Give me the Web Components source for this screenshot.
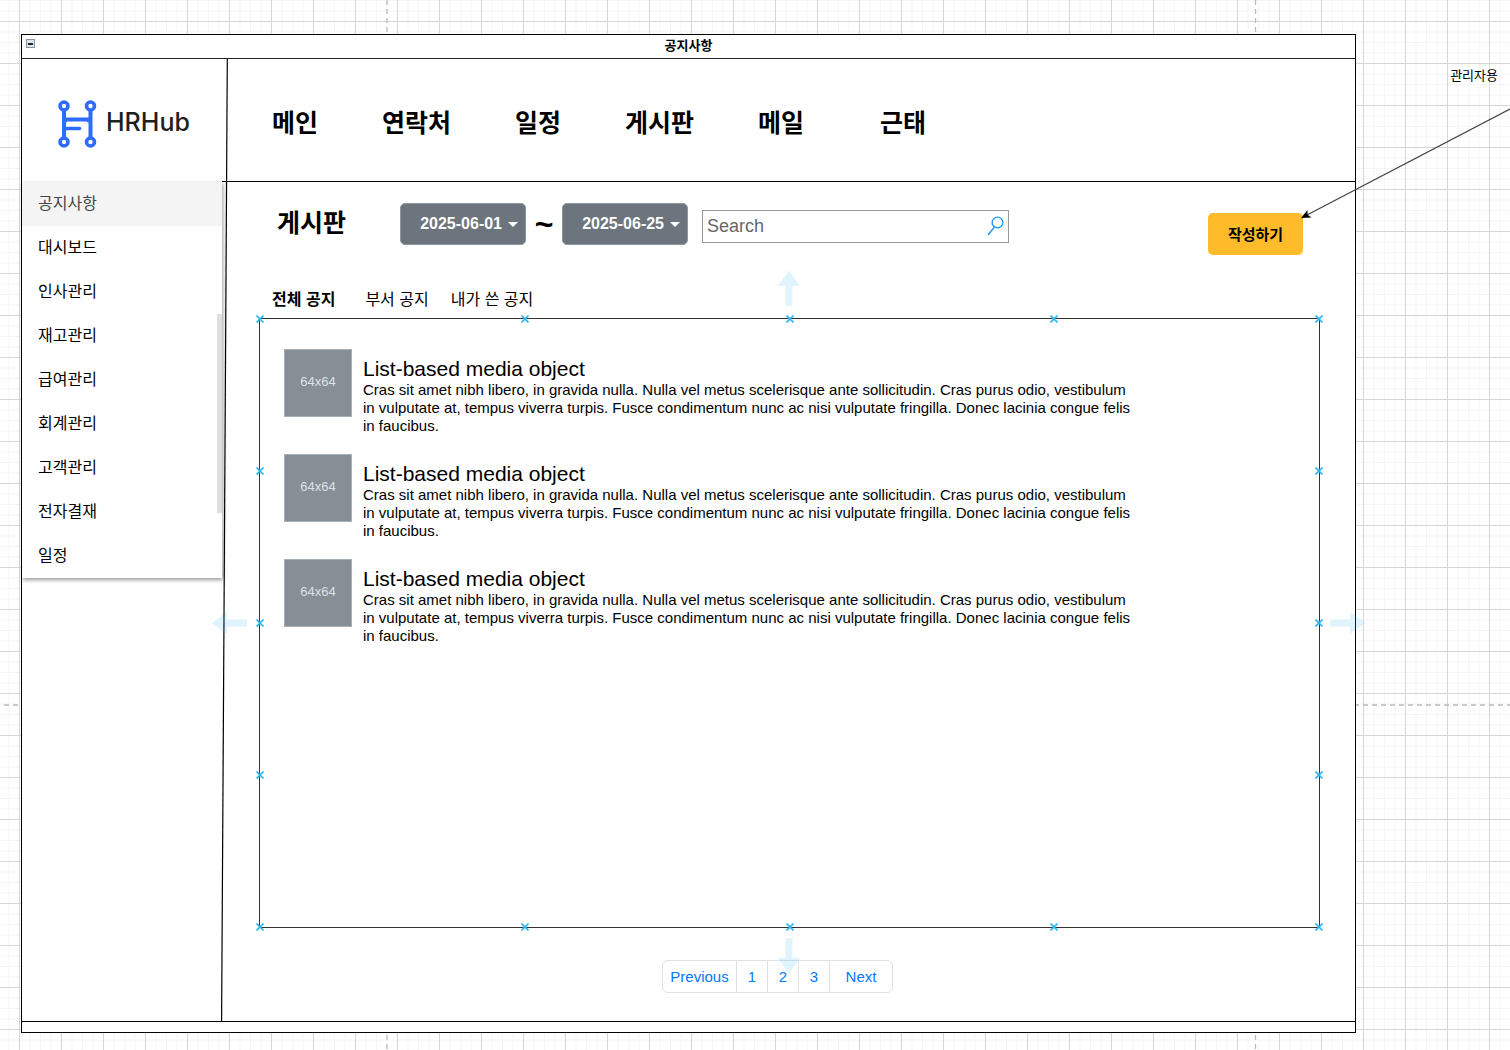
<!DOCTYPE html>
<html lang="ko">
<head>
<meta charset="utf-8">
<title>공지사항</title>
<style>
body{margin:0;font-family:"Liberation Sans","Noto Sans CJK KR",sans-serif;color:#000}
</style>
</head>
<body>
<hr-canvas></hr-canvas>
<script>
const define = (name, html, setup) => {
  const tpl = document.createElement('template');
  tpl.innerHTML = html;
  customElements.define(name, class extends HTMLElement {
    constructor() {
      super();
      this.attachShadow({ mode: 'open' }).append(tpl.content.cloneNode(true));
    }
    connectedCallback() { if (setup) setup(this, this.shadowRoot); }
  });
};

define('hr-logo', `
<style>
:host{display:flex;align-items:center;gap:9px}
svg{display:block;flex:none}
span{padding-bottom:4px;font:500 25px/34px Inter,sans-serif;color:#1f1f1f}
</style>
<svg width="40" height="50" viewBox="0 0 40 50" fill="none" stroke="#2f6bff" aria-hidden="true">
  <g stroke-width="3.6"><circle cx="7" cy="7" r="4"/><circle cx="33.500" cy="7" r="4"/><circle cx="7" cy="43" r="4"/><circle cx="33.500" cy="43" r="4"/></g>
  <path stroke-width="4" d="M7 11V39M33.500 11V39M7 20.500H33"/>
  <path stroke-width="3.600" stroke-linecap="round" d="M8 29.500H22.500"/>
  <path fill="#2f6bff" stroke="none" d="M8 21h4q-3 1-3 4zM32 21h-4q3 1 3 4zM8 33v-4h4q-3 1-3 4z"/>
</svg>
<span>HRHub</span>`);

define('hr-nav', `
<style>
:host{display:block}
nav{display:flex;gap:64px}
a{color:#000;text-decoration:none;font:700 25px/36px "Noto Sans CJK KR",sans-serif;white-space:nowrap}
a:nth-child(6){margin-left:12px}
</style>
<nav><a href="#main">메인</a><a href="#contacts">연락처</a><a href="#schedule">일정</a><a href="#board">게시판</a><a href="#mail">메일</a><a href="#attendance">근태</a></nav>`);

define('hr-side-menu', `
<style>
:host{display:block;position:relative;background:#fff;box-shadow:1px 2px 4px rgba(0,0,0,.4)}
a{display:block;box-sizing:border-box;height:44px;padding:0 16px;color:#000;text-decoration:none;font:16px/40px "Noto Sans CJK KR",sans-serif}
a[aria-current]{background:#f4f4f4;color:#444}
i{position:absolute;right:0;top:132px;width:5px;height:199px;background:#dedede}
</style>
<nav><a href="#notice" aria-current="page">공지사항</a><a href="#dashboard">대시보드</a><a href="#people">인사관리</a><a href="#stock">재고관리</a><a href="#payroll">급여관리</a><a href="#accounts">회계관리</a><a href="#clients">고객관리</a><a href="#approval">전자결재</a><a href="#calendar">일정</a></nav><i></i>`);

define('hr-date-button', `
<style>
:host{display:block}
button{display:flex;align-items:center;justify-content:flex-end;gap:6px;box-sizing:border-box;width:126px;height:42px;padding:0 7px 0 0;border:1px solid #8d969c;border-radius:5px;background:#6c757d;color:#fff;font:700 16px/20px "Liberation Sans",sans-serif}
svg{display:block}
</style>
<button type="button"><slot></slot><svg width="10" height="5" viewBox="0 0 10 5" aria-hidden="true"><path fill="#fff" d="M0 0H10L5 5z"/></svg></button>`);

define('hr-search', `
<style>
:host{display:block}
form{display:flex;align-items:center;box-sizing:border-box;width:307px;height:33px;padding:0 4px;border:1px solid #999;background:#fff}
input{flex:1;min-width:0;border:0;padding:0;outline:0;background:none;font:18px/24px "Liberation Sans",sans-serif;color:#666}
input::placeholder{color:#666;opacity:1}
button{border:0;padding:0;background:none}
svg{display:block}
</style>
<form><input type="search" aria-label="Search" placeholder="Search"><button type="button" aria-label="Search"><svg width="17" height="20" viewBox="0 0 17 20" fill="none" stroke="#2196f3" stroke-width="1.300"><circle cx="10.500" cy="6.500" r="5.400"/><path d="M7.500 11L1 19"/></svg></button></form>`);

define('hr-toolbar', `
<style>
:host{display:flex;align-items:flex-start;justify-content:space-between;padding:0 52px 0 49px}
div{display:flex;align-items:center}
h1{margin:0 54px 0 0;padding-bottom:6px;font:700 25px/36px "Noto Sans CJK KR",sans-serif}
b{width:36px;text-align:center;font:700 32px/40px "Liberation Sans",sans-serif}
hr-search{margin:4px 0 0 14px}
.write{margin-top:10px;width:95px;height:42px;padding:0;border:0;border-radius:5px;background:#ffbb29;color:#000;font:700 15px/24px "Noto Sans CJK KR",sans-serif}
</style>
<div><h1>게시판</h1><hr-date-button>2025-06-01</hr-date-button><b>~</b><hr-date-button>2025-06-25</hr-date-button><hr-search></hr-search></div>
<button class="write" type="button">작성하기</button>`);

define('hr-tabs', `
<style>
:host{display:flex;gap:22px;padding-left:44px}
button{border:0;padding:0;background:none;color:#000;font:16px/24px "Noto Sans CJK KR",sans-serif}
.on{font-weight:700;margin-right:8px}
</style>
<button type="button" class="on">전체 공지</button><button type="button">부서 공지</button><button type="button">내가 쓴 공지</button>`);

define('hr-media', `
<style>
:host{display:flex;gap:11px;height:105px}
.thumb{flex:none;box-sizing:border-box;width:68px;height:68px;border:1px solid #a9b0b5;background:#868e96;color:#dee2e6;font:13px/64px "Liberation Sans",sans-serif;text-align:center}
h2{margin:8px 0 0;font:400 21px/24px "Liberation Sans",sans-serif}
p{margin:0;max-width:770px;font:15px/18px "Liberation Sans",sans-serif}
</style>
<div class="thumb">64x64</div>
<div><h2><slot name="title"></slot></h2><p><slot></slot></p></div>`);

define('hr-arrow', `
<style>
:host{display:block;position:absolute;width:36px;height:22px}
svg{display:block}
</style>
<svg width="36" height="22" viewBox="0 0 36 22" aria-hidden="true"><path fill="#29b6f2" fill-opacity=".15" d="M0 7.500H20V0L35.500 11L20 22V14.500H0z"/></svg>`);

define('hr-panel', `
<style>
:host{display:block;position:relative;box-sizing:border-box;height:610px;border:1px solid #333;padding:30px 24px}
.marks svg{position:absolute;width:8px;height:8px;margin:-4px}
.n{left:50%;top:-42px;margin-left:-19px;transform:rotate(-90deg)}
.s{left:50%;bottom:-40px;margin-left:-19px;transform:rotate(90deg)}
.w{left:-49px;top:50%;margin-top:-11px;transform:rotate(180deg)}
.e{right:-47px;top:50%;margin-top:-11px}
</style>
<slot></slot>
<hr-arrow class="n"></hr-arrow><hr-arrow class="s"></hr-arrow><hr-arrow class="w"></hr-arrow><hr-arrow class="e"></hr-arrow>
<div class="marks"></div>`,
(el, root) => {
  const spots = [];
  for (const t of [0, 25, 50, 75, 100]) spots.push([t, 0], [t, 100]);
  for (const t of [25, 50, 75]) spots.push([0, t], [100, t]);
  root.querySelector('.marks').innerHTML = spots.map(([x, y]) =>
    '<svg viewBox="0 0 8 8" style="left:' + x + '%;top:' + y + '%" aria-hidden="true"><path stroke="#29b6f2" stroke-width="1.600" d="M.5 .5L7.500 7.500M7.500 .5L.5 7.500"/></svg>').join('');
});

define('hr-pager', `
<style>
:host{display:block}
nav{display:flex;width:max-content;border:1px solid #dee2e6;border-radius:6px}
a{box-sizing:border-box;width:31px;height:31px;text-align:center;color:#007bff;text-decoration:none;font:15px/31px "Liberation Sans",sans-serif}
a+a{border-left:1px solid #dee2e6}
a:first-child{width:73px}
a:last-child{width:63px}
</style>
<nav aria-label="Pages"><a href="#prev">Previous</a><a href="#1">1</a><a href="#2">2</a><a href="#3">3</a><a href="#next">Next</a></nav>`);

define('hr-window', `
<style>
:host{display:block;position:relative;box-sizing:border-box;border:1px solid #000;background:#fff;padding-bottom:10px}
header{display:flex;align-items:center;height:23px;padding:0 4px;border-bottom:1px solid #222}
header span{flex:1;padding:0 9px 4px 0;text-align:center;font:700 13px/20px "Noto Sans CJK KR",sans-serif}
header button{width:9px;height:9px;padding:0;border:1px solid #8791a8;background:#dfe3ea;display:flex;align-items:center;justify-content:center;margin-bottom:6px}
header button::before{content:"";width:5px;height:2px;background:#222}
.body{position:relative;display:grid;grid-template-columns:200px minmax(0,1fr);grid-template-rows:123px 839px;border-bottom:1px solid #000}
.divider{position:absolute;left:199px;top:0;width:7px;height:100%}
.top{border-bottom:1px solid #000;padding:44px 0 0 50px}
hr-logo{padding:7px 0 0 35px}
main{padding:21px 35px 0 0}
hr-toolbar,hr-tabs{margin-left:6px;margin-right:-35px}
hr-tabs{margin-top:31px}
hr-panel{margin:8px 0 0 37px}
hr-pager{margin:32px 0 0 440px}
</style>
<header><button type="button" aria-label="Collapse"></button><span>공지사항</span></header>
<div class="body">
  <svg class="divider" viewBox="0 0 7 963" preserveAspectRatio="none" aria-hidden="true"><path stroke="#000" stroke-width="1.200" d="M6.300 0L.6 963"/></svg>
  <hr-logo></hr-logo>
  <div class="top"><hr-nav></hr-nav></div>
  <div><hr-side-menu></hr-side-menu></div>
  <main>
    <hr-toolbar></hr-toolbar>
    <hr-tabs></hr-tabs>
    <hr-panel></hr-panel>
    <hr-pager></hr-pager>
  </main>
</div>`, (el, root) => {
  const text = 'Cras sit amet nibh libero, in gravida nulla. Nulla vel metus scelerisque ante sollicitudin. Cras purus odio, vestibulum in vulputate at, tempus viverra turpis. Fusce condimentum nunc ac nisi vulputate fringilla. Donec lacinia congue felis in faucibus.';
  root.querySelector('hr-panel').innerHTML = ('<hr-media><span slot="title">List-based media object</span>' + text + '</hr-media>').repeat(3);
});

define('hr-canvas', `
<style>
:host{display:flex;align-items:flex-start;position:relative;box-sizing:border-box;min-height:100vh;padding:34px 0 17px 21px;overflow:hidden;background:#fff}
.grid{position:absolute;inset:0;width:100%;height:100%}
hr-window{flex:1;min-width:0}
aside{position:relative;flex:none;width:154px;padding-top:31px;box-sizing:border-box}
p{margin:0 12px 0 0;text-align:right;font:13px/20px "Noto Sans CJK KR",sans-serif}
.link{position:absolute;left:-55px;top:72px}
</style>
<svg class="grid" aria-hidden="true">
  <defs><pattern id="g" x="19" y="21" width="42" height="42" patternUnits="userSpaceOnUse">
    <path stroke="#f5f5f5" d="M11 0V42M21.500 0V42M32 0V42M0 11H42M0 21.500H42M0 32H42"/>
    <path stroke="#d6d6d6" d="M.5 0V42M0 .5H42"/>
  </pattern></defs>
  <rect width="100%" height="100%" fill="url(#g)"/>
  <path stroke="#bbb" stroke-width="1.300" stroke-dasharray="5 4" d="M387 0V3000M1255.500 0V3000M4 705H3000"/>
</svg>
<hr-window></hr-window>
<aside><p>관리자용</p>
<svg class="link" width="212" height="116" viewBox="0 0 212 116" aria-hidden="true"><path stroke="#444" stroke-width="1.300" d="M6 109L209 3"/><path d="M0 112L6.500 104L6.500 108.700L10.500 111.500z"/></svg>
</aside>`);
</script>
</body>
</html>
